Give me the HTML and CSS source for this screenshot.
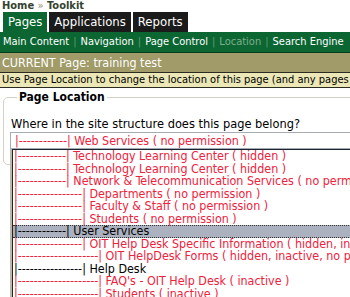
FILE: index.html
```html
<!DOCTYPE html>
<html lang="en">
<head>
    <meta charset="UTF-8">
    <title>Toolkit - Page Location</title>
    <link rel="stylesheet" href="styles.css">
</head>
<body>
    <div class="crumbs"><b>Home</b> <span class="raquo">&raquo;</span> Toolkit</div>
    <ul class="tabs">
        <li class="tab active">Pages</li>
        <li class="tab">Applications</li>
        <li class="tab">Reports</li>
    </ul>
    <nav class="subnav">
        <a href="#">Main Content</a><span class="sep">|</span><a href="#">Navigation</a><span class="sep">|</span><a href="#">Page Control</a><span class="sep">|</span><a href="#" class="current-link">Location</a><span class="sep">|</span><a href="#">Search Engine</a>
    </nav>
    <div class="current">CURRENT Page: training test</div>
    <div class="hint">Use Page Location to change the location of this page (and any pages below it)</div>
    <section class="location">
        <h2 class="legend">Page Location</h2>
        <p class="question">Where in the site structure does this page belong?</p>
        <div class="picker">
            <div class="select">|------------| Web Services ( no permission )</div>
            <ul class="options">
                <li>|------------| Technology Learning Center ( hidden )</li>
                <li>|------------| Technology Learning Center ( hidden )</li>
                <li>|------------| Network &amp; Telecommunication Services ( no permission )</li>
                <li>|----------------| Departments ( no permission )</li>
                <li>|----------------| Faculty &amp; Staff ( no permission )</li>
                <li>|----------------| Students ( no permission )</li>
                <li class="ok selected">|------------| User Services</li>
                <li>|----------------| OIT Help Desk Specific Information ( hidden, inactive )</li>
                <li>|--------------------| OIT HelpDesk Forms ( hidden, inactive, no permission )</li>
                <li class="ok">|----------------| Help Desk</li>
                <li>|--------------------| FAQ's - OIT Help Desk ( inactive )</li>
                <li>|--------------------| Students ( inactive )</li>
            </ul>
        </div>
    </section>
</body>
</html>
```

FILE: styles.css
```css
html {
    overflow: hidden;
}

body {
    width: 350px;
    height: 297px;
    overflow: hidden;
    margin: 0;
    font-family: "DejaVu Sans Condensed", "DejaVu Sans", sans-serif;
    font-size: 11px;
    color: #000;
    background: #fff;
    white-space: nowrap;
}

.crumbs {
    height: 12px;
    line-height: 12px;
    padding-left: 2px;
    color: #34432f;
    font-weight: bold;
}

.crumbs .raquo {
    color: #8a8f7a;
    font-weight: normal;
}

.tabs {
    display: flex;
    gap: 2px;
    margin: 0;
    padding: 0 0 0 3px;
    list-style: none;
    height: 20px;
}

.tab {
    background: #1b1b1b;
    color: #fff;
    font-size: 13px;
    line-height: 20px;
    padding: 0 5px;
}

.tab.active {
    background: #0b6632;
}

.subnav {
    background: #0b6632;
    height: 20px;
    line-height: 20px;
    border-bottom: 1px solid #063d1d;
    padding-left: 3px;
}

.subnav a {
    color: #fff;
    text-decoration: none;
}

.subnav .sep {
    color: #5f9a72;
    margin: 0 4px;
}

.subnav .current-link {
    color: #7fae8c;
}

.current {
    background: #a09b68;
    color: #fff;
    font-size: 12.4px;
    height: 19px;
    line-height: 19px;
    padding-left: 2px;
}

.hint {
    background: #ebe7b6;
    border-top: 1px solid #2b2b22;
    border-bottom: 1px solid #2b2b22;
    line-height: 14px;
    padding-left: 2px;
}

.location {
    width: 600px;
    height: 66px;
    margin: 9px 0 0 3px;
    padding: 0 6px 0 6px;
    border: 1px solid #d2d2c6;
    border-radius: 5px;
}

.legend {
    width: fit-content;
    margin: -7px 0 0 7px;
    padding: 0 2px;
    background: #fff;
    font-size: 12px;
    font-weight: bold;
    line-height: 13px;
}

.question {
    margin: 13px 0 1px 1px;
    font-size: 12.7px;
    line-height: 14px;
}

.picker {
    position: relative;
}

.select {
    border: 1px solid #a5acb5;
    height: 15px;
    line-height: 15px;
    padding-left: 4px;
    font-size: 12.4px;
    color: #f0213c;
}

.options {
    position: absolute;
    left: 2px;
    top: 17px;
    width: 700px;
    height: 200px;
    margin: 0;
    padding: 0;
    list-style: none;
    background: #fff;
    border-top: 1px solid #1d2430;
    border-left: 1px solid #1d2430;
    box-shadow: -2px 0 0 #bdb8a8;
}

.options li {
    font-size: 12.4px;
    height: 12.5px;
    line-height: 12.5px;
    padding-left: 1px;
    color: #f0213c;
}

.options li.ok {
    color: #000;
}

.options li.selected {
    background: #abb1be;
    border-top: 1px dotted #333;
    border-bottom: 1px dotted #333;
    height: 10.5px;
    line-height: 10.5px;
}
```
